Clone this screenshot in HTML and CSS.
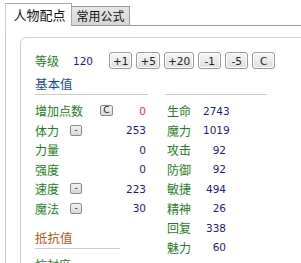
FILE: index.html
```html
<!DOCTYPE html>
<html lang="zh">
<head>
<meta charset="utf-8">
<link rel="stylesheet" href="styles.css">
</head>
<body>
<div class="frame">
  <div class="tabs">
    <div class="tab active">人物配点</div>
    <div class="tab">常用公式</div>
    <div class="tabfill"></div>
  </div>
  <div class="page">
    <div class="panel">
      <div class="level-row">
        <span class="lbl lvl-lbl">等级</span>
        <span class="num lvl-num">120</span>
        <div class="btns">
          <button class="btn">+1</button>
          <button class="btn">+5</button>
          <button class="btn">+20</button>
          <button class="btn">-1</button>
          <button class="btn">-5</button>
          <button class="btn">C</button>
        </div>
      </div>
      <div class="heading blue">基本值</div>
      <div class="cols">
        <div class="col col-left">
          <div class="sec">
            <div class="row"><span class="lbl">增加点数</span><span class="mini mini-c">C</span><span class="num val red">0</span></div>
            <div class="row"><span class="lbl">体力</span><span class="mini">-</span><span class="num val">253</span></div>
            <div class="row"><span class="lbl">力量</span><span class="num val">0</span></div>
            <div class="row"><span class="lbl">强度</span><span class="num val">0</span></div>
            <div class="row"><span class="lbl">速度</span><span class="mini">-</span><span class="num val">223</span></div>
            <div class="row"><span class="lbl">魔法</span><span class="mini">-</span><span class="num val">30</span></div>
          </div>
          <div class="heading orange resist">抵抗值</div>
          <div class="sec short">
            <div class="row"><span class="lbl">抗封度</span></div>
          </div>
        </div>
        <div class="col col-right">
          <div class="sec">
            <div class="row rrow"><span class="lbl rlbl">生命</span><span class="num rval">2743</span></div>
            <div class="row rrow"><span class="lbl rlbl">魔力</span><span class="num rval">1019</span></div>
            <div class="row rrow"><span class="lbl rlbl">攻击</span><span class="num rval">92</span></div>
            <div class="row rrow"><span class="lbl rlbl">防御</span><span class="num rval">92</span></div>
            <div class="row rrow"><span class="lbl rlbl">敏捷</span><span class="num rval">494</span></div>
            <div class="row rrow"><span class="lbl rlbl">精神</span><span class="num rval">26</span></div>
            <div class="row rrow"><span class="lbl rlbl">回复</span><span class="num rval">338</span></div>
            <div class="row rrow"><span class="lbl rlbl">魅力</span><span class="num rval">60</span></div>
          </div>
        </div>
      </div>
    </div>
  </div>
</div>
</body>
</html>
```
FILE: styles.css
```css
html, body {
  margin: 0;
  padding: 0;
  background: #ffffff;
  overflow: hidden;
}
body {
  font-family: "Noto Sans CJK SC", "DejaVu Sans", sans-serif;
  font-size: 12px;
  color: #000;
}
.frame {
  margin-left: 5px;
  width: 380px;
}
.tabs {
  display: flex;
  align-items: flex-end;
  height: 26px;
}
.tab {
  box-sizing: border-box;
  font-size: 12px;
  color: #111;
  text-align: center;
}
.tab.active {
  width: 67px;
  height: 23px;
  line-height: 21px;
  font-size: 13px;
  background: #fff;
  border: 1px solid #a8a8a8;
  border-left-color: #d0d0d0;
  border-bottom: none;
  padding-left: 2px;
}
.tab:not(.active) {
  width: 58px;
  height: 20px;
  line-height: 18px;
  background: linear-gradient(#e6e6e6, #d6d6d6);
  border: 1px solid #999;
  border-left: none;
}
.tabfill {
  flex: 1;
  height: 26px;
  box-sizing: border-box;
  border-bottom: 1px solid #999;
}
.page {
  border-left: 1px solid #c8c8c8;
  padding: 11px 0 0 14px;
  height: 300px;
}
.panel {
  border: 1px solid #cfcfcf;
  border-radius: 6px 0 0 0;
  padding: 14px 0 0 14px;
  height: 400px;
}
.lbl {
  color: #1e7d1e;
}
.num {
  font-family: "DejaVu Sans", sans-serif;
  font-size: 10.5px;
  color: #1c1c80;
}
.level-row {
  display: flex;
  align-items: center;
  height: 17px;
}
.lvl-lbl {
  width: 38px;
}
.lvl-num {
  width: 36px;
}
.btns {
  display: flex;
  gap: 4px;
}
.btn {
  box-sizing: border-box;
  min-width: 23px;
  height: 17px;
  padding: 0 3px;
  margin: 0;
  font-family: "DejaVu Sans", sans-serif;
  font-size: 10.5px;
  color: #222;
  background: linear-gradient(#f6f6f6, #dedede);
  border: 1px solid #9a9a9a;
  border-radius: 3px;
  box-shadow: inset 0 0 0 1px #fff;
  line-height: 14px;
}
.heading {
  margin-top: 5px;
  height: 20px;
  line-height: 20px;
  font-size: 12.5px;
}
.blue {
  color: #1d4f8e;
}
.orange {
  color: #b5581c;
}
.cols {
  display: flex;
  gap: 17px;
}
.col-left {
  width: 113px;
}
.col-right {
  width: 102px;
}
.sec {
  border-top: 1px solid #cccccc;
  padding-top: 6px;
}
.sec.short {
  width: 85px;
}
.row {
  display: flex;
  align-items: center;
  height: 19.5px;
}
.mini {
  box-sizing: border-box;
  width: 12px;
  height: 11px;
  margin-left: 11px;
  border: 1px solid #8a8a8a;
  border-radius: 2px;
  background: linear-gradient(#f2f2f2, #d8d8d8);
  font-family: "DejaVu Sans", sans-serif;
  font-size: 9px;
  line-height: 8px;
  text-align: center;
  color: #222;
}
.mini-c {
  width: 13px;
  margin-left: 17px;
  line-height: 9px;
}
.val {
  margin-left: auto;
  padding-right: 2px;
}
.red {
  color: #e03a3a;
}
.resist {
  margin-top: 10px;
}
.rrow {
  padding-left: 2px;
}
.rlbl {
  width: 36px;
}
.rval {
  width: 23px;
  text-align: right;
}
```
